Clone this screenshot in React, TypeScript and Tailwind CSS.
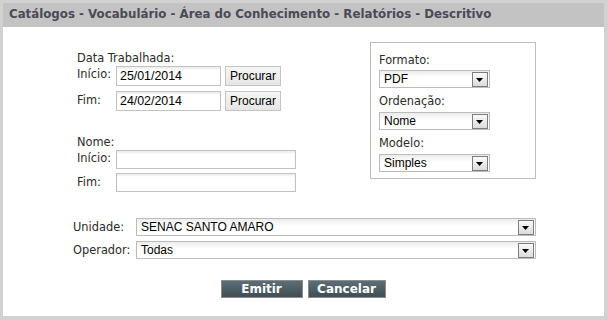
import React from "react";

const labelCls = "font-['DejaVu_Sans',sans-serif] text-[11.4px] text-[#2b2b2b] leading-[16px]";
const inputCls =
  "border border-[#c2c2c2] bg-white shadow-[inset_0_2px_2px_rgba(0,0,0,0.07)] font-['Liberation_Sans',Arial,sans-serif] text-[12.4px] text-black px-[3px] flex items-center";

function Arrow() {
  return (
    <div className="w-[16px] h-[15px] border border-[#7d7d7d] bg-linear-to-b from-[#fafafa] to-[#dcdcdc] flex items-center justify-center mr-[1px]">
      <svg width="8" height="5" viewBox="0 0 8 5" className="mt-[3px]">
        <path d="M0 0 H7 L3.5 4 Z" fill="#000" />
      </svg>
    </div>
  );
}

function Select({ value, w }: { value: string; w: string }) {
  return (
    <div
      className={`${w} h-[18px] border border-[#bcbcbc] bg-linear-to-b from-[#ececec] via-white via-[45%] to-white flex items-center justify-between pl-[4px] font-['Liberation_Sans',Arial,sans-serif] text-[12px] text-black`}
    >
      <span className="leading-none">{value}</span>
      <Arrow />
    </div>
  );
}

function Procurar() {
  return (
    <div className="w-[56px] h-[20px] border border-[#c4c4c4] bg-linear-to-b from-[#f6f6f6] to-[#e6e6e6] flex items-center justify-center font-['Liberation_Sans',Arial,sans-serif] text-[12px] text-black">
      Procurar
    </div>
  );
}

export default function App() {
  return (
    <div className="w-[608px] h-[320px] bg-[#d2d2d2] pt-[3px] pl-[3px] pr-[4px] pb-[4px] flex flex-col">
      <div className="flex-1 bg-white flex flex-col">
        <div className="h-[24px] bg-[#c3c3c3] flex items-center pl-[6px]">
          <span className="font-['DejaVu_Sans',sans-serif] font-bold text-[11.8px] text-[#4a4a58]">
            Catálogos - Vocabulário - Área do Conhecimento - Relatórios - Descritivo
          </span>
        </div>
        <div className="pl-[70px] pt-[15px] flex flex-col">
          <div className="flex">
            {/* left column */}
            <div className="w-[297px] pl-[4px] pt-[8px] flex flex-col">
              <div className={labelCls}>Data Trabalhada:</div>
              <div className="flex">
                <div className={`${labelCls} w-[39px]`}>Início:</div>
                <div className="flex gap-[4px]">
                  <div className={`${inputCls} w-[105px] h-[20px]`}>25/01/2014</div>
                  <Procurar />
                </div>
              </div>
              <div className="flex mt-[5px]">
                <div className={`${labelCls} w-[39px] pt-[1px]`}>Fim:</div>
                <div className="flex gap-[4px]">
                  <div className={`${inputCls} w-[105px] h-[20px]`}>24/02/2014</div>
                  <Procurar />
                </div>
              </div>
              <div className={`${labelCls} mt-[23px]`}>Nome:</div>
              <div className="flex mt-[0px]">
                <div className={`${labelCls} w-[39px]`}>Início:</div>
                <div className={`${inputCls} w-[180px] h-[19px]`}></div>
              </div>
              <div className="flex mt-[4px]">
                <div className={`${labelCls} w-[39px] pt-[1px]`}>Fim:</div>
                <div className={`${inputCls} w-[180px] h-[19px]`}></div>
              </div>
            </div>
            {/* right box */}
            <div className="w-[166px] h-[137px] border border-[#bdbdbd] pl-[8px] pt-[9px] flex flex-col">
              <div className={labelCls}>Formato:</div>
              <div className="mt-[2px]">
                <Select value="PDF" w="w-[111px]" />
              </div>
              <div className={`${labelCls} mt-[5px]`}>Ordenação:</div>
              <div className="mt-[3px]">
                <Select value="Nome" w="w-[111px]" />
              </div>
              <div className={`${labelCls} mt-[5px]`}>Modelo:</div>
              <div className="mt-[3px]">
                <Select value="Simples" w="w-[111px]" />
              </div>
            </div>
          </div>
          <div className="flex items-center mt-[26px]">
            <div className={`${labelCls} w-[63px]`}>Unidade:</div>
            <Select value="SENAC SANTO AMARO" w="w-[400px]" />
          </div>
          <div className="flex items-center mt-[5px]">
            <div className={`${labelCls} w-[63px]`}>Operador:</div>
            <Select value="Todas" w="w-[400px]" />
          </div>
        </div>
        <div className="flex justify-center gap-[5px] mt-[21px] pr-[1px]">
          <div className="w-[82px] h-[18px] border border-[#8c8c8c] bg-linear-to-b from-[#5d6e76] to-[#3f4e55] flex items-center justify-center font-['DejaVu_Sans',sans-serif] font-bold text-[12px] text-white">
            Emitir
          </div>
          <div className="w-[78px] h-[18px] border border-[#8c8c8c] bg-linear-to-b from-[#5d6e76] to-[#3f4e55] flex items-center justify-center font-['DejaVu_Sans',sans-serif] font-bold text-[12px] text-white">
            Cancelar
          </div>
        </div>
      </div>
    </div>
  );
}
